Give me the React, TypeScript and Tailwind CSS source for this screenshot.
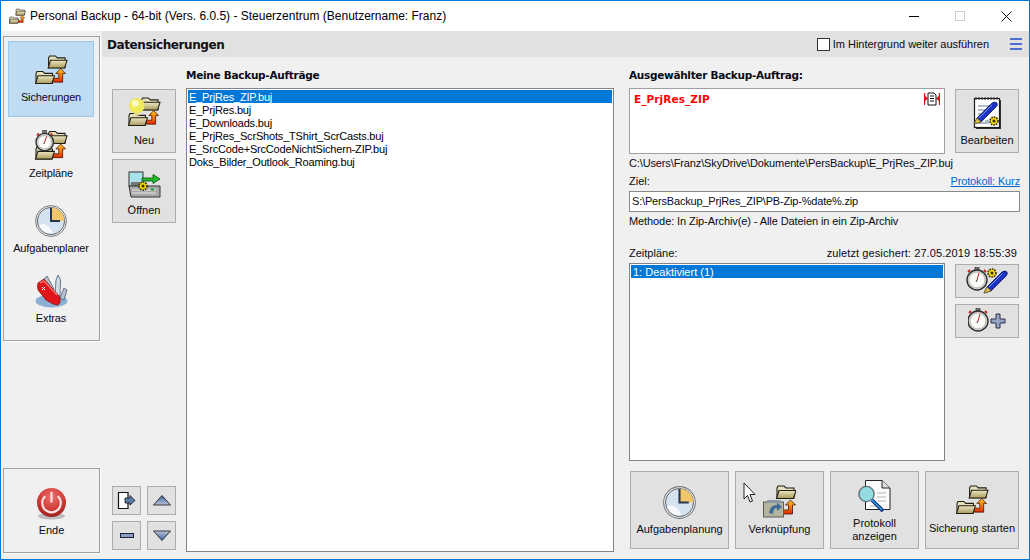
const font = "font-['Liberation_Sans',Arial,sans-serif]";
const boldFont = "font-['DejaVu_Sans',sans-serif] font-bold text-[10.5px] leading-[14px]";

const Folder = ({ x, y }: { x: number; y: number }) => (
  <g transform={`translate(${x} ${y})`}>
    <defs>
      <linearGradient id="folderFront" x1="0" y1="0" x2="0" y2="1">
        <stop offset="0" stopColor="#eee6c0" />
        <stop offset="1" stopColor="#a89a5e" />
      </linearGradient>
    </defs>
    <path d="M1 3 L2 1 H8 L10 3 H18 V13 H1 Z" fill="#e6dfbd" stroke="#1f1e12" strokeWidth="1.1" />
    <path d="M0.5 13.5 L3 5.5 H20 L17.5 13.5 Z" fill="url(#folderFront)" stroke="#1f1e12" strokeWidth="1.1" />
  </g>
);

const UpArrow = ({ x, y }: { x: number; y: number }) => (
  <g transform={`translate(${x} ${y})`}>
    <defs>
      <linearGradient id="arrowFill" x1="0" y1="0" x2="0" y2="1">
        <stop offset="0" stopColor="#ffc41c" />
        <stop offset="0.5" stopColor="#f57a10" />
        <stop offset="1" stopColor="#e02a00" />
      </linearGradient>
    </defs>
    <path d="M0 10 H5.5 V5 H2.5 L7.5 0 L12.5 5 H9.5 V14 H0 Z" fill="url(#arrowFill)" stroke="#4a1500" strokeWidth="0.8" />
  </g>
);

const FoldersIcon = () => (
  <g>
    <Folder x={13} y={0} />
    <Folder x={0} y={16} />
    <UpArrow x={19} y={14} />
  </g>
);

const Watch = ({ x, y, r = 9 }: { x: number; y: number; r?: number }) => (
  <g>
    <path d={`M${x - r + 1} ${y - r + 2} l2 -2 M${x + r - 3} ${y - r} l2 2`} stroke="#c02020" strokeWidth="1.8" />
    <rect x={x - 2} y={y - r - 3} width="4" height="3" fill="#777" stroke="#222" strokeWidth="0.6" />
    <circle cx={x} cy={y} r={r} fill="#cfcfca" stroke="#2d2d2d" strokeWidth="1.4" />
    <circle cx={x} cy={y} r={r - 2.2} fill="#fbfbf8" stroke="#a9a9a9" strokeWidth="0.6" />
    <path d={`M${x} ${y} L${x + 2} ${y - r + 3}`} stroke="#d01818" strokeWidth="1" />
    <path d={`M${x} ${y} L${x - 1} ${y + 2}`} stroke="#333" strokeWidth="1" />
  </g>
);

const Clock = ({ size = 32 }: { size?: number }) => (
  <svg width={size} height={size} viewBox="0 0 32 32">
    <circle cx="16" cy="16" r="15.4" fill="#f2f2f2" stroke="#77797d" strokeWidth="1" />
    <circle cx="16" cy="16" r="13.6" fill="#d5e3f0" stroke="#54585e" strokeWidth="0.9" />
    <path d="M4 20 Q12 16 18 28 Q8 30 4 20 Z" fill="#f6f9fc" />
    <path d="M16 16 V2.6 A13.4 13.4 0 0 1 29.4 16 Z" fill="#f1c76a" />
    <path d="M15 3 H17 V15 H25 V17 H15 Z" fill="#25364f" />
  </svg>
);

const Knife = () => (
  <svg width="33" height="33" viewBox="0 0 33 33">
    <ellipse cx="16.5" cy="26" rx="16" ry="6.5" fill="#8cb0d4" />
    <path d="M15 18 L8 5 L12 1 L19 14 Z" fill="#b4c2d0" stroke="#4c5e70" strokeWidth="0.8" />
    <path d="M20 20 L21 5 L23 0 L25.5 5 L25 21 Z" fill="#cfdbe6" stroke="#4c5e70" strokeWidth="0.8" />
    <path d="M25 23 L29 13 L32 15 L29 25 Z" fill="#b4c2d0" stroke="#4c5e70" strokeWidth="0.8" />
    <path d="M3 8 L9 4 L24 21 Q27 27 23 30 L18 29 L11 25 L3 15 Q2 11 3 8 Z" fill="#e0141a" stroke="#7d0a0c" strokeWidth="0.7" />
    <path d="M5 8 L9 6 L22 20" fill="none" stroke="#ff7a72" strokeWidth="1.2" />
    <path d="M7 12 l3 3 m0 -3 l-3 3" stroke="#fff" strokeWidth="1" />
  </svg>
);

const Power = () => (
  <svg width="31" height="33" viewBox="0 0 32 34">
    <defs>
      <radialGradient id="pw" cx="50%" cy="30%" r="75%">
        <stop offset="0" stopColor="#e8736e" />
        <stop offset="0.6" stopColor="#cf3a35" />
        <stop offset="1" stopColor="#8e1c1a" />
      </radialGradient>
    </defs>
    <ellipse cx="16" cy="30" rx="14" ry="3.5" fill="#bdbdbd" />
    <circle cx="16" cy="16" r="15" fill="url(#pw)" />
    <path d="M9.5 9.5 A9.6 9.6 0 1 0 22.5 9.5" fill="none" stroke="#fbe7e4" strokeWidth="2.2" />
    <path d="M16 5 V16" stroke="#fbe7e4" strokeWidth="2.2" />
  </svg>
);

const Pen = ({ x, y }: { x: number; y: number }) => (
  <g transform={`translate(${x} ${y})`}>
    <path d="M0 22 L3 16 L18 1 Q21 -1 23 1 Q24 3 22 5 L7 20 Z" fill="#1e34c4" stroke="#0b1560" strokeWidth="0.8" />
    <path d="M5 16 L18 3" stroke="#7d95f2" strokeWidth="1" />
    <path d="M0 22 L3 16 L7 20 Z" fill="#d9c24a" stroke="#6c5c10" strokeWidth="0.6" />
  </g>
);

const Gear = ({ x, y, r = 4 }: { x: number; y: number; r?: number }) => (
  <g>
    <circle cx={x} cy={y} r={r} fill="#f5d90a" stroke="#302a00" strokeWidth="1.6" strokeDasharray="1.6 1" />
    <circle cx={x} cy={y} r={r / 2.6} fill="#3a3300" />
  </g>
);

const NeuIcon = () => (
  <svg width="33" height="31" viewBox="0 0 34 32">
    <FoldersIcon />
    <circle cx="9" cy="9" r="8" fill="#f1ea5a" />
    <circle cx="7.5" cy="6.5" r="3.5" fill="#fdfbc2" />
    <path d="M6 16 H12 V19 H6 Z" fill="#e6df8a" />
  </svg>
);

const OpenIcon = () => (
  <svg width="33" height="27" viewBox="0 0 33 27">
    <rect x="1" y="1" width="14" height="14" fill="#a8e3ec" stroke="#333" strokeWidth="1" />
    <rect x="3" y="11" width="9" height="4" fill="#777" />
    <path d="M14 7 H25 V3.5 L32 8 L25 12.5 V10 H14 Z" fill="#20bd29" stroke="#0a4f10" strokeWidth="0.8" />
    <path d="M1 15 H32 V26 H3 Z" fill="#a9a9a9" stroke="#333" strokeWidth="1" />
    <path d="M4 19 H28 M4 22 H28" stroke="#e4e4e4" strokeWidth="1" />
    <rect x="23" y="17.5" width="3" height="2" fill="#18a030" />
    <Gear x={15} y={15} r={4} />
  </svg>
);

const NoteIcon = () => (
  <svg width="29" height="33" viewBox="0 0 29 33">
    <rect x="3" y="3" width="25" height="29" fill="#333" />
    <rect x="1.5" y="1.5" width="25" height="29" fill="#fff" stroke="#1c1c1c" strokeWidth="1.2" />
    <path d="M3 0 V3 M6 0 V3 M9 0 V3 M12 0 V3 M15 0 V3 M18 0 V3 M21 0 V3 M24 0 V3" stroke="#333" strokeWidth="1" />
    <path d="M5 9 H17 M5 13 H13 M5 17 H11 M12 24 H16 M5 26 H16" stroke="#98a6b8" strokeWidth="1.4" />
    <Pen x={1} y={5} />
    <Gear x={21} y={24} r={4} />
  </svg>
);

const DocMagnifier = () => (
  <svg width="33" height="32" viewBox="0 0 33 32">
    <path d="M7.5 0.5 H24 L32 8 V29.5 H7.5 Z" fill="#fbfbfb" stroke="#222" strokeWidth="1" />
    <path d="M24 0.5 V8 H32" fill="#e0e0e0" stroke="#222" strokeWidth="1" />
    <path d="M19 13 H28 M19 17 H28 M20 21 H28 M12 26 H24" stroke="#b4b4b4" strokeWidth="1" />
    <circle cx="8.5" cy="14" r="7.6" fill="#93dce0" stroke="#58606a" strokeWidth="1.4" strokeOpacity="0.9" />
    <path d="M14 20 L25 31" stroke="#10206e" strokeWidth="3.6" />
    <path d="M14 20 L24 30" stroke="#2aa2e4" strokeWidth="1.6" />
  </svg>
);

const ShortcutIcon = () => (
  <svg width="33" height="33" viewBox="0 0 33 33">
    <Folder x={13} y={0} />
    <UpArrow x={20} y={15} />
    <rect x="0.5" y="17" width="20" height="15" fill="#b3b39e" stroke="#5c5c50" strokeWidth="1" />
    <rect x="4" y="15" width="14" height="3" fill="#8d9aa5" />
    <path d="M6 28 Q7 20 14 20 V17.5 L19 22 L14 26 V23 Q10 23 10 29 Z" fill="#3d6c98" />
  </svg>
);

const MiniDoc = () => (
  <svg width="16" height="14" viewBox="0 0 16 14">
    <path d="M0 3 L4 6.5 L0 10 Z M16 3 L12 6.5 L16 10 Z" fill="#e01010" />
    <rect x="0" y="1" width="1.2" height="12" fill="#e01010" />
    <rect x="14.8" y="1" width="1.2" height="12" fill="#e01010" />
    <path d="M4 1 H10 L12 3 V13 H4 Z" fill="#fff" stroke="#111" strokeWidth="1" />
    <path d="M6 4 H10 M6 6.5 H10 M6 9 H10" stroke="#111" strokeWidth="1" />
  </svg>
);

const Raised = ({ className = "", children }: { className?: string; children: React.ReactNode }) => (
  <div className={`flex flex-col items-center bg-[#e1e1e1] border border-[#adadad] ${className}`}>{children}</div>
);

const NavItem = ({ label, icon, active, className = "" }: { label: string; icon: React.ReactNode; active?: boolean; className?: string }) => (
  <div className={`flex flex-col items-center mx-[4px] w-[86px] ${active ? "bg-[#bfdcf3] border border-[#99c9ef]" : "border border-transparent"} ${className}`}>
    {icon}
    <span className="text-[11px] leading-[14px] tracking-[-0.14px]">{label}</span>
  </div>
);

const jobs = [
  "E_PrjRes.buj",
  "E_Downloads.buj",
  "E_PrjRes_ScrShots_TShirt_ScrCasts.buj",
  "E_SrcCode+SrcCodeNichtSichern-ZIP.buj",
  "Doks_Bilder_Outlook_Roaming.buj",
];

export default function App() {
  return (
    <div className={`${font} w-[1030px] h-[560px] flex flex-col bg-[#f0f0f0] border border-[#0078d7] text-[11px] text-[#0a0a14] overflow-hidden`}>
      {/* Title bar */}
      <div className="h-[30px] bg-white flex items-center shrink-0">
        <svg className="ml-[8px] mr-[4px]" width="17" height="17" viewBox="0 0 34 32">
          <FoldersIcon />
        </svg>
        <span className="text-[12px] text-black">Personal Backup - 64-bit (Vers. 6.0.5) - Steuerzentrum (Benutzername: Franz)</span>
        <div className="ml-auto flex items-center">
          <div className="w-[46px] flex justify-center">
            <div className="w-[10px] h-px bg-black" />
          </div>
          <div className="w-[46px] flex justify-center">
            <div className="w-[10px] h-[10px] border border-[#cccccc]" />
          </div>
          <div className="w-[46px] flex justify-center">
            <svg width="11" height="11" viewBox="0 0 11 11">
              <path d="M0.5 0.5 L10.5 10.5 M10.5 0.5 L0.5 10.5" stroke="#111" strokeWidth="1" />
            </svg>
          </div>
        </div>
      </div>

      <div className="flex-1 flex min-h-0">
        {/* Left navigation */}
        <div className="w-[101px] pl-[2px] pt-[5px] pb-[6px] flex flex-col justify-between shrink-0">
          <div className="w-[97px] h-[305px] border border-[#a0a0a0] shadow-[1px_1px_0_#ffffff] pt-[4px] flex flex-col">
            <NavItem
              active
              className="h-[76px] pt-[13px] gap-[4px]"
              label="Sicherungen"
              icon={<svg width="33" height="31" viewBox="0 0 34 32"><FoldersIcon /></svg>}
            />
            <NavItem
              className="h-[75px] pt-[12px] gap-[3px]"
              label="Zeitpläne"
              icon={
                <svg width="33" height="33" viewBox="0 0 34 33">
                  <FoldersIcon />
                  <Watch x={10} y={12} r={9} />
                </svg>
              }
            />
            <NavItem className="h-[75px] pt-[12px] gap-[4px]" label="Aufgabenplaner" icon={<Clock />} />
            <NavItem className="h-[70px] pt-[7px] gap-[3px]" label="Extras" icon={<Knife />} />
          </div>
          <div className="w-[97px] h-[85px] border border-[#a0a0a0] shadow-[1px_1px_0_#ffffff] flex flex-col items-center pt-[18px] gap-[3px]">
            <Power />
            <span className="text-[11px] leading-[14px]">Ende</span>
          </div>
        </div>

        <div className="flex-1 flex flex-col min-w-0">
          {/* Section header */}
          <div className="h-[26px] bg-[#e1e1e1] flex items-center pl-[5px] pr-[7px] shrink-0">
            <span className="font-['DejaVu_Sans',sans-serif] font-bold text-[12px] tracking-[-0.4px] pt-[1px] text-[#10101a]">Datensicherungen</span>
            <div className="ml-auto w-[13px] h-[13px] bg-white border border-[#333333] mr-[3px]" />
            <span className="text-[11px] tracking-[-0.03px]">Im Hintergrund weiter ausführen</span>
            <div className="ml-[21px] w-[12px] flex flex-col gap-[2.5px]">
              <div className="h-[2.5px] bg-[#4a6bd8]" />
              <div className="h-[2.5px] bg-[#4a6bd8]" />
              <div className="h-[2.5px] bg-[#4a6bd8]" />
            </div>
          </div>

          <div className="flex-1 flex pl-[10px] min-h-0">
            {/* Toolbar */}
            <div className="w-[64px] mr-[10px] pt-[32px] pb-[9px] flex flex-col justify-between shrink-0">
              <div className="flex flex-col gap-[6px]">
                <Raised className="h-[64px] pt-[7px] gap-[5px]">
                  <NeuIcon />
                  <span className="leading-[14px]">Neu</span>
                </Raised>
                <Raised className="h-[64px] pt-[11px] gap-[5px]">
                  <OpenIcon />
                  <span className="leading-[14px]">Öffnen</span>
                </Raised>
              </div>
              <div className="grid grid-cols-2 gap-x-[6px] gap-y-[6px]">
                <Raised className="w-[29px] h-[29px] justify-center">
                  <svg width="19" height="19" viewBox="0 0 19 19">
                    <path d="M1.5 1.5 H11 V17.5 H1.5 Z" fill="#fff" stroke="#111" strokeWidth="1.2" />
                    <path d="M8 7 H13 V4.5 L18 9.5 L13 14 V12 H8 Z" fill="#5d7ba8" stroke="#111" strokeWidth="0.8" />
                  </svg>
                </Raised>
                <Raised className="w-[29px] h-[29px] justify-center">
                  <svg width="18" height="11" viewBox="0 0 18 11">
                    <defs>
                      <linearGradient id="up" x1="0" y1="0" x2="0" y2="1">
                        <stop offset="0" stopColor="#3f5f96" />
                        <stop offset="1" stopColor="#b9c4da" />
                      </linearGradient>
                    </defs>
                    <path d="M9 0.5 L17.5 10 H0.5 Z" fill="url(#up)" stroke="#111" strokeWidth="0.8" />
                  </svg>
                </Raised>
                <Raised className="w-[29px] h-[29px] justify-center">
                  <div className="w-[14px] h-[5px] bg-[#8d9cc4] border border-[#1c2236]" />
                </Raised>
                <Raised className="w-[29px] h-[29px] justify-center">
                  <svg width="18" height="11" viewBox="0 0 18 11">
                    <defs>
                      <linearGradient id="down" x1="0" y1="0" x2="0" y2="1">
                        <stop offset="0" stopColor="#b9c4da" />
                        <stop offset="1" stopColor="#3f5f96" />
                      </linearGradient>
                    </defs>
                    <path d="M0.5 1 H17.5 L9 10.5 Z" fill="url(#down)" stroke="#111" strokeWidth="0.8" />
                  </svg>
                </Raised>
              </div>
            </div>

            {/* Job list */}
            <div className="w-[428px] mr-[15px] flex flex-col pb-[7px] shrink-0">
              <div className={`h-[31px] pt-[11px] tracking-[-0.28px] ${boldFont}`}>Meine Backup-Aufträge</div>
              <div className="flex-1 bg-white border border-[#82828c] p-[1px] text-[11px] tracking-[-0.18px] text-black">
                <div className="h-[13px] leading-[15px] bg-[#0078d7] text-white pl-[1px]">E_PrjRes_ZIP.buj</div>
                {jobs.map((job) => (
                  <div key={job} className="h-[13px] leading-[15px] pl-[1px]">{job}</div>
                ))}
              </div>
            </div>

            {/* Selected job */}
            <div className="w-[391px] flex flex-col pb-[9px] shrink-0">
              <div className={`h-[31px] pt-[11px] tracking-[-0.3px] ${boldFont}`}>Ausgewählter Backup-Auftrag:</div>
              <div className="flex gap-[10px]">
                <div className="w-[316px] h-[66px] bg-white border border-[#a0a0a0] flex justify-between pl-[4px] pr-[4px] pt-[3px]">
                  <span className={`${boldFont} tracking-[0.08px] text-[#ff0000]`}>E_PrjRes_ZIP</span>
                  <MiniDoc />
                </div>
                <Raised className="w-[64px] h-[64px] mt-[1px] pt-[7px] gap-[3px]">
                  <NoteIcon />
                  <span className="leading-[14px]">Bearbeiten</span>
                </Raised>
              </div>
              <div className="mt-[2px] h-[14px] leading-[14px] tracking-[-0.13px]">C:\Users\Franz\SkyDrive\Dokumente\PersBackup\E_PrjRes_ZIP.buj</div>
              <div className="mt-[4px] h-[14px] flex justify-between leading-[14px]">
                <span>Ziel:</span>
                <span className="text-[#0066cc] underline tracking-[-0.13px]">Protokoll: Kurz</span>
              </div>
              <div className="mt-[3px] h-[21px] bg-white border border-[#8a8a8a] flex items-center pl-[2px] tracking-[-0.18px]">S:\PersBackup_PrjRes_ZIP\PB-Zip-%date%.zip</div>
              <div className="mt-[2px] h-[14px] leading-[14px] tracking-[-0.09px]">Methode: In Zip-Archiv(e) - Alle Dateien in ein Zip-Archiv</div>
              <div className="mt-[18px] h-[14px] flex justify-between leading-[14px] pr-[3px]">
                <span>Zeitpläne:</span>
                <span className="tracking-[0.1px]">zuletzt gesichert: 27.05.2019 18:55:39</span>
              </div>
              <div className="mt-[3px] flex gap-[10px]">
                <div className="w-[316px] h-[198px] bg-white border border-[#82828c] p-[1px]">
                  <div className="bg-[#0078d7] text-white pl-[2px] h-[13px] leading-[14px]">1: Deaktiviert (1)</div>
                </div>
                <div className="flex flex-col gap-[6px] mt-[1px]">
                  <Raised className="w-[64px] h-[34px] justify-center">
                    <svg width="44" height="28" viewBox="0 0 44 28">
                      <Watch x={12} y={13} r={10} />
                      <Pen x={19} y={4} />
                      <Gear x={27} y={6} r={4} />
                    </svg>
                  </Raised>
                  <Raised className="w-[64px] h-[34px] justify-center">
                    <svg width="38" height="26" viewBox="0 0 38 26">
                      <Watch x={10} y={13} r={10} />
                      <path d="M28 6 h4 v5 h5 v4 h-5 v5 h-4 v-5 h-5 v-4 h5 Z" fill="#95a6c8" stroke="#2a3148" strokeWidth="1" />
                    </svg>
                  </Raised>
                </div>
              </div>
              <div className="mt-[10px] flex gap-[6px] ml-[1px]">
                <Raised className="w-[99px] h-[78px] pt-[14px] gap-[3px]">
                  <Clock size={33} />
                  <span className="leading-[14px]">Aufgabenplanung</span>
                </Raised>
                <Raised className="w-[89px] h-[78px] pt-[13px] gap-[4px] relative">
                  <ShortcutIcon />
                  <span className="leading-[14px]">Verknüpfung</span>
                  <svg className="absolute left-[7px] top-[10px]" width="14" height="22" viewBox="0 0 14 22">
                    <path d="M1 1 V17 L4.5 13.5 L7 20 L9.5 19 L7 12.5 L12 12.5 Z" fill="#fff" stroke="#222" strokeWidth="1" />
                  </svg>
                </Raised>
                <Raised className="w-[89px] h-[78px] pt-[8px]">
                  <DocMagnifier />
                  <span className="leading-[13px] text-center mt-[5px]">Protokoll<br />anzeigen</span>
                </Raised>
                <Raised className="w-[94px] h-[78px] pt-[13px] gap-[5px]">
                  <svg width="33" height="31" viewBox="0 0 34 32"><FoldersIcon /></svg>
                  <span className="leading-[14px]">Sicherung starten</span>
                </Raised>
              </div>
            </div>
          </div>
        </div>
      </div>
    </div>
  );
}
